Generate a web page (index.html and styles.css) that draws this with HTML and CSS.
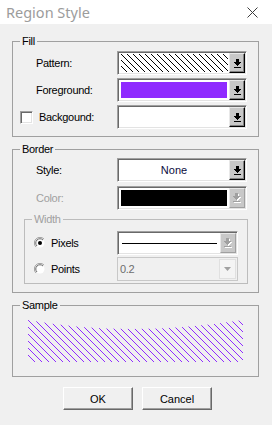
FILE: index.html
```html
<!DOCTYPE html>
<html>
<head>
<meta charset="utf-8">
<link rel="stylesheet" href="styles.css">
</head>
<body>
<div class="dialog">
  <div class="titlebar">
    <span class="title">Region Style</span>
    <svg class="close" width="11" height="11" viewBox="0 0 11 11"><path d="M0.5 0.5L10.5 10.5M10.5 0.5L0.5 10.5" stroke="#3c3c3c" stroke-width="1"/></svg>
  </div>
  <div class="content">
    <div class="group fill">
      <span class="legend">Fill</span>
      <div class="row">
        <span class="label">Pattern:</span>
        <div class="combo w130">
          <div class="field"><svg class="hatch" width="107" height="18"><defs><pattern id="ph" width="6" height="6" patternUnits="userSpaceOnUse"><rect x="0" y="0" width="1" height="1"/><rect x="1" y="1" width="1" height="1"/><rect x="2" y="2" width="1" height="1"/><rect x="3" y="3" width="1" height="1"/><rect x="4" y="4" width="1" height="1"/><rect x="5" y="5" width="1" height="1"/></pattern></defs><rect width="107" height="18" fill="url(#ph)"/></svg></div>
          <span class="dbtn"><svg width="7" height="9" viewBox="0 0 7 9"><rect x="2" y="0" width="3" height="3"/><rect x="0" y="3" width="7" height="1"/><rect x="1" y="4" width="5" height="1"/><rect x="2" y="5" width="3" height="1"/><rect x="3" y="6" width="1" height="1"/><rect x="0" y="8" width="7" height="1"/></svg></span>
        </div>
      </div>
      <div class="row">
        <span class="label">Foreground:</span>
        <div class="combo w130">
          <div class="field pad"><div class="swatch purple"></div></div>
          <span class="dbtn"><svg width="7" height="9" viewBox="0 0 7 9"><rect x="2" y="0" width="3" height="3"/><rect x="0" y="3" width="7" height="1"/><rect x="1" y="4" width="5" height="1"/><rect x="2" y="5" width="3" height="1"/><rect x="3" y="6" width="1" height="1"/><rect x="0" y="8" width="7" height="1"/></svg></span>
        </div>
      </div>
      <div class="row">
        <span class="label chk"><span class="checkbox"></span>Backgound:</span>
        <div class="combo w130">
          <div class="field"></div>
          <span class="dbtn"><svg width="7" height="9" viewBox="0 0 7 9"><rect x="2" y="0" width="3" height="3"/><rect x="0" y="3" width="7" height="1"/><rect x="1" y="4" width="5" height="1"/><rect x="2" y="5" width="3" height="1"/><rect x="3" y="6" width="1" height="1"/><rect x="0" y="8" width="7" height="1"/></svg></span>
        </div>
      </div>
    </div>

    <div class="group border">
      <span class="legend">Border</span>
      <div class="row">
        <span class="label">Style:</span>
        <div class="combo w130">
          <div class="field text">None</div>
          <span class="dbtn"><svg width="7" height="9" viewBox="0 0 7 9"><rect x="2" y="0" width="3" height="3"/><rect x="0" y="3" width="7" height="1"/><rect x="1" y="4" width="5" height="1"/><rect x="2" y="5" width="3" height="1"/><rect x="3" y="6" width="1" height="1"/><rect x="0" y="8" width="7" height="1"/></svg></span>
        </div>
      </div>
      <div class="row">
        <span class="label disabled">Color:</span>
        <div class="combo w130">
          <div class="field pad"><div class="swatch black"></div></div>
          <span class="dbtn off"><svg width="8" height="10" viewBox="0 0 8 10"><g fill="#fff" transform="translate(1,1)"><rect x="2" y="0" width="3" height="3"/><rect x="0" y="3" width="7" height="1"/><rect x="1" y="4" width="5" height="1"/><rect x="2" y="5" width="3" height="1"/><rect x="3" y="6" width="1" height="1"/><rect x="0" y="8" width="7" height="1"/></g><g fill="#a0a0a0"><rect x="2" y="0" width="3" height="3"/><rect x="0" y="3" width="7" height="1"/><rect x="1" y="4" width="5" height="1"/><rect x="2" y="5" width="3" height="1"/><rect x="3" y="6" width="1" height="1"/><rect x="0" y="8" width="7" height="1"/></g></svg></span>
        </div>
      </div>
      <div class="subgroup">
        <span class="legend disabled">Width</span>
        <div class="row">
          <span class="label radio-label"><svg class="radio" width="12" height="12" viewBox="0 0 12 12"><path d="M10 2A5.5 5.5 0 0 0 2 10" fill="none" stroke="#a0a0a0"/><circle cx="6" cy="6" r="4.5" fill="#fff"/><path d="M9 3A4.2 4.2 0 0 0 3 9" fill="none" stroke="#696969"/><circle cx="6" cy="6" r="2" fill="#000"/></svg>Pixels</span>
          <div class="combo w121">
            <div class="field line"><span class="hline"></span></div>
            <span class="dbtn off"><svg width="8" height="10" viewBox="0 0 8 10"><g fill="#fff" transform="translate(1,1)"><rect x="2" y="0" width="3" height="3"/><rect x="0" y="3" width="7" height="1"/><rect x="1" y="4" width="5" height="1"/><rect x="2" y="5" width="3" height="1"/><rect x="3" y="6" width="1" height="1"/><rect x="0" y="8" width="7" height="1"/></g><g fill="#a0a0a0"><rect x="2" y="0" width="3" height="3"/><rect x="0" y="3" width="7" height="1"/><rect x="1" y="4" width="5" height="1"/><rect x="2" y="5" width="3" height="1"/><rect x="3" y="6" width="1" height="1"/><rect x="0" y="8" width="7" height="1"/></g></svg></span>
          </div>
        </div>
        <div class="row">
          <span class="label radio-label"><svg class="radio" width="12" height="12" viewBox="0 0 12 12"><path d="M10 2A5.5 5.5 0 0 0 2 10" fill="none" stroke="#a0a0a0"/><circle cx="6" cy="6" r="4.5" fill="#fff"/><path d="M9 3A4.2 4.2 0 0 0 3 9" fill="none" stroke="#696969"/></svg>Points</span>
          <div class="combo w121 flat">
            <div class="field gray">0.2</div>
            <span class="fbtn"><svg width="7" height="4" viewBox="0 0 7 4"><path d="M0 0H7L3.5 4Z" fill="#a0a0a0"/></svg></span>
          </div>
        </div>
      </div>
    </div>

    <div class="group sample">
      <span class="legend">Sample</span>
      <svg class="sample-art" width="215" height="42" viewBox="0 0 215 42">
        <defs>
          <pattern id="sh" width="7" height="7" patternUnits="userSpaceOnUse"><g fill="#8f2bff"><rect x="0" y="0" width="1" height="1"/><rect x="1" y="1" width="1" height="1"/><rect x="2" y="2" width="1" height="1"/><rect x="3" y="3" width="1" height="1"/><rect x="4" y="4" width="1" height="1"/><rect x="5" y="5" width="1" height="1"/><rect x="6" y="6" width="1" height="1"/></g></pattern>
          <clipPath id="sc"><path d="M0 0Q100 18 215 0V42H0Z"/></clipPath>
        </defs>
        <rect width="215" height="42" fill="url(#sh)" clip-path="url(#sc)"/>
      </svg>
    </div>

    <div class="buttons">
      <button class="btn">OK</button>
      <button class="btn">Cancel</button>
    </div>
  </div>
</div>
</body>
</html>
```
FILE: styles.css
```css
* { box-sizing: border-box; }
html, body { margin: 0; padding: 0; }
body {
  width: 272px;
  height: 425px;
  overflow: hidden;
  background: #f0f0f0;
  font-family: "Liberation Sans", Arial, sans-serif;
  font-size: 11px;
  letter-spacing: -0.3px;
  color: #000;
}
.titlebar {
  height: 24px;
  background: #fff;
  display: flex;
  align-items: center;
  justify-content: space-between;
  padding: 0 14px 0 6px;
}
.title {
  font-family: "Noto Sans", "Open Sans", sans-serif;
  font-size: 14.5px;
  letter-spacing: 0;
  color: #9c9c9c;
}
.close { display: block; margin-top: 1px; }
.content { padding: 17px 13px 0 12px; }
.group {
  position: relative;
  border: 1px solid #a0a0a0;
}
.legend {
  position: absolute;
  top: -7px;
  left: 7px;
  padding: 0 2px;
  line-height: 13px;
  background: #f0f0f0;
}
.disabled { color: #a0a0a0; }
.fill {
  padding: 9px 0 7px 0;
  display: flex;
  flex-direction: column;
  gap: 3px;
}
.row {
  display: flex;
  align-items: center;
  height: 24px;
}
.label {
  width: 104px;
  flex: none;
  padding-left: 23px;
}
.label.chk {
  display: flex;
  align-items: center;
  padding-left: 7px;
}
.checkbox {
  width: 13px;
  height: 13px;
  margin-right: 6px;
  background: #fff;
  border-top: 1px solid #a0a0a0;
  border-left: 1px solid #a0a0a0;
  border-right: 1px solid #fff;
  border-bottom: 1px solid #fff;
  box-shadow: inset 1px 1px 0 #696969, inset -1px -1px 0 #e3e3e3;
}
.combo {
  display: flex;
  height: 24px;
  background: #fff;
  border-top: 1px solid #a0a0a0;
  border-left: 1px solid #a0a0a0;
  border-right: 1px solid #fff;
  border-bottom: 1px solid #fff;
  box-shadow: inset 1px 1px 0 #696969, inset -1px -1px 0 #e3e3e3;
  padding: 1px;
}
.w130 { width: 130px; }
.w121 { width: 121px; }
.field {
  flex: 1;
  min-width: 0;
  display: flex;
  align-items: center;
}
.field.pad { padding: 2px; }
.hatch { display: block; margin-left: 2px; }
.swatch { flex: 1; align-self: stretch; }
.purple { background: #8f2bff; }
.black { background: #000; }
.field.text {
  justify-content: center;
  color: #0c0c40;
  letter-spacing: 0;
}
.field.line { padding: 0 3px; }
.hline { flex: 1; height: 1px; background: #000; }
.dbtn {
  width: 16px;
  flex: none;
  display: flex;
  align-items: center;
  justify-content: center;
  background: #c8c8c8;
  border: 1px solid #000;
  border-top-color: #e8e8e8;
  border-left-color: #e8e8e8;
  box-shadow: inset -1px -1px 0 #808080;
}
.dbtn svg { display: block; }
.dbtn.off {
  border-color: #a0a0a0;
  border-top-color: #e8e8e8;
  border-left-color: #e8e8e8;
  box-shadow: none;
}
.border {
  margin-top: 12px;
  padding: 8px 0 8px 0;
  display: flex;
  flex-direction: column;
  gap: 4px;
}
.subgroup {
  position: relative;
  margin: 5px 10px 0 11px;
  border: 1px solid #bcbcbc;
  padding: 11px 0 2px 0;
  display: flex;
  flex-direction: column;
  gap: 2px;
}
.subgroup .label { width: 92px; }
.radio-label {
  display: flex;
  align-items: center;
  padding-left: 9px !important;
}
.radio { display: block; margin-right: 5px; flex: none; }
.combo.flat {
  background: #f0f0f0;
  box-shadow: none;
  border: 1px solid #c8c8c8;
  padding: 1px;
}
.field.gray { color: #6d6d6d; padding-left: 1px; }
.fbtn {
  width: 17px;
  flex: none;
  display: flex;
  align-items: center;
  justify-content: center;
  background: #f4f4f4;
  border: 1px solid #e0e0e0;
}
.fbtn svg { display: block; }
.sample {
  margin-top: 12px;
  padding: 14px 0 14px 15px;
}
.sample-art { display: block; }
.buttons {
  display: flex;
  gap: 9px;
  margin-top: 10px;
  padding-left: 51px;
}
.btn {
  width: 70px;
  height: 23px;
  padding: 0;
  font-family: "Liberation Sans", Arial, sans-serif;
  font-size: 11px;
  letter-spacing: 0;
  color: #000;
  background: #f0f0f0;
  border: 1px solid #696969;
  border-top-color: #fff;
  border-left-color: #fff;
  box-shadow: inset -1px -1px 0 #a0a0a0;
}
```
